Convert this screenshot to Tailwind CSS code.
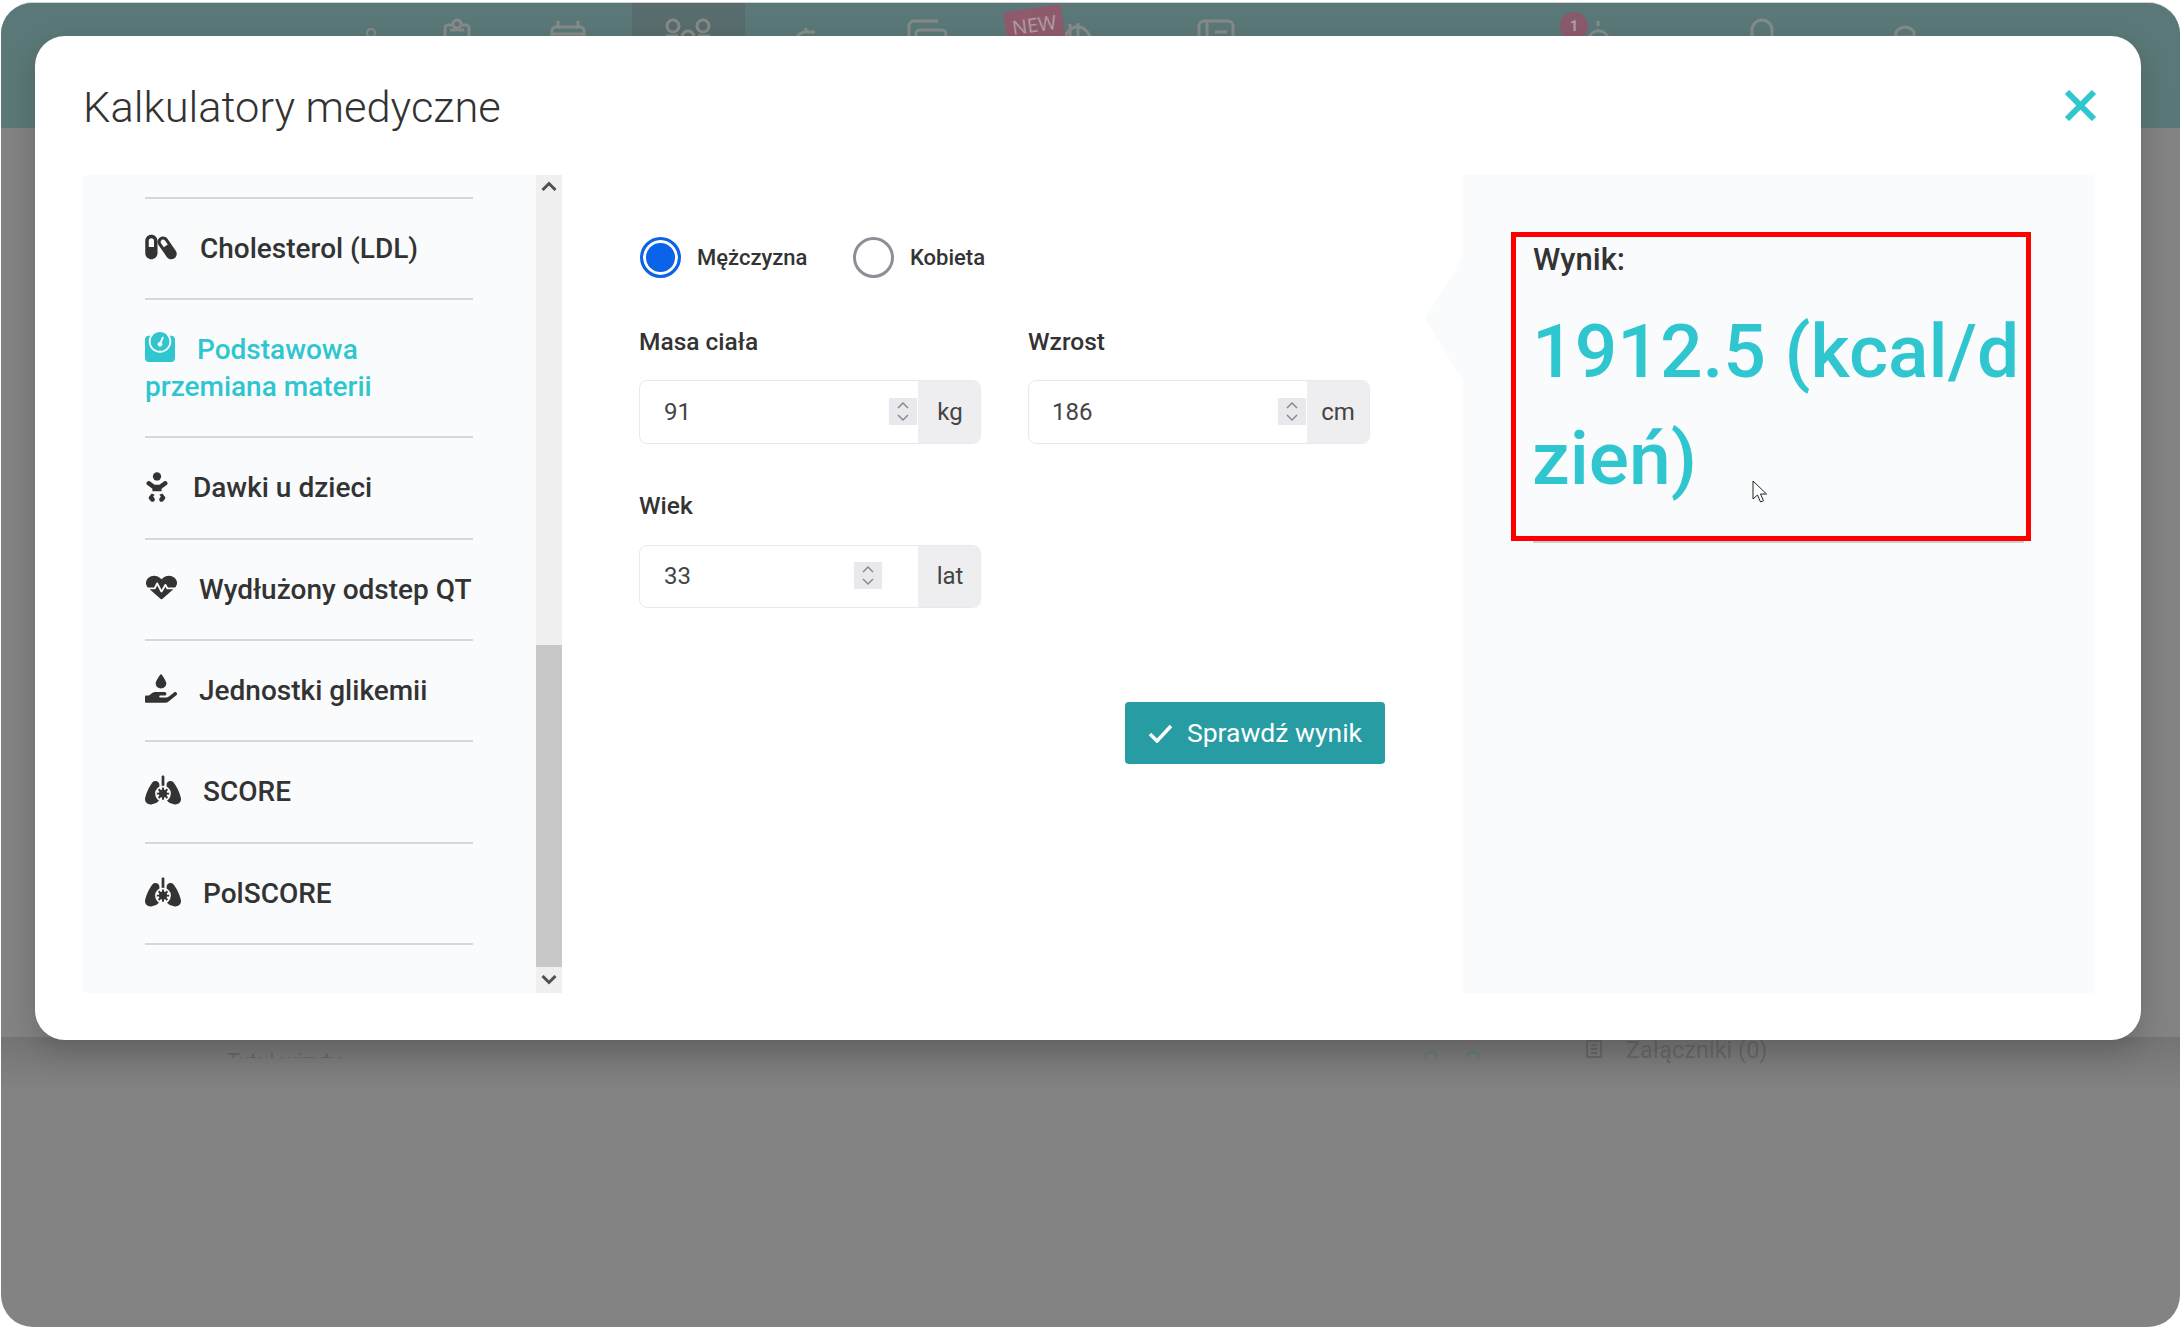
<!DOCTYPE html>
<html lang="pl">
<head>
<meta charset="utf-8">
<title>Kalkulatory medyczne</title>
<script src="https://cdn.jsdelivr.net/npm/@tailwindcss/browser@4"></script>
</head>
<body class="m-0 bg-white font-['Roboto',sans-serif] text-[#333]">
<div class="relative w-[2181px] h-[1329px] overflow-hidden bg-white">

  <!-- Dimmed application behind the dialog -->
  <div class="relative mx-[1px] mt-[2px] h-[1325px] rounded-[32px] overflow-hidden bg-[#838383] border-t border-[#d0d0d0]">
    <header class="relative h-[125px] bg-[#5a7877]">
      <div class="absolute left-[631px] top-0 w-[113px] h-full bg-[#586c6d]"></div>
      <svg class="absolute left-[-1px] top-[-3px] blur-[0.4px]" width="2181" height="60" viewBox="0 0 2181 60" fill="none" stroke="#868a89" stroke-width="3">
        <circle cx="371" cy="33" r="4" stroke-width="2"/>
        <path d="M445 40v-12a3 3 0 0 1 3-3h5M469 40v-12a3 3 0 0 0-3-3h-5"/><circle cx="457" cy="24" r="4"/><path d="M450 30h14"/>
        <path d="M552 40v-9a4 4 0 0 1 4-4h24a4 4 0 0 1 4 4v9zM552 34h32M558 21v6M578 21v6"/>
        <circle cx="673" cy="26" r="6"/><circle cx="703" cy="26" r="6"/><circle cx="688" cy="37" r="6"/><path d="M666 36h12M698 36h12"/>
        <path d="M795 46c0-10 5-14 12-14h8M806 28v5"/>
        <path d="M909 40v-14a5 5 0 0 1 5-5h24M916 40v-6a4 4 0 0 1 4-4h22a4 4 0 0 1 4 4v6"/>
        <path d="M1064 40a14 18 0 0 1 27 0M1070 24v16M1078 23v17"/>
        <path d="M1199 40V26a5 5 0 0 1 5-5h24a5 5 0 0 1 5 5v14M1207 21v19M1215 32h12"/>
        <path d="M1588 40a11 13 0 0 1 21 0M1598 21v5"/>
        <path d="M1752 40v-10a10 10 0 0 1 20 0v10"/>
        <path d="M1896 40v-8a11 11 0 0 1 18 0v8M1892 37h24"/>
      </svg>
      <div class="absolute left-[1005px] top-[5px] w-[58px] h-[44px] pt-[5px] -rotate-[8deg] rounded-[4px] bg-[#8f5a6c] text-center text-[20px] leading-[24px] text-[#b3a5a9] font-['Open_Sans',sans-serif] blur-[0.4px]">NEW</div>
      <div class="absolute left-[1559px] top-[9px] w-[28px] h-[28px] rounded-full bg-[#8a5a6c] text-center text-[15px] font-bold leading-[28px] text-[#b3a0a5] blur-[0.4px]">1</div>
    </header>
    <!-- Content under the dialog: only its upper edge shows -->
    <div class="absolute left-0 top-[1034px] w-full h-[56px] bg-gradient-to-b from-[#747474] to-[#838383]">
      <span class="absolute left-[1625px] top-[3px] text-[23.500px] leading-[20px] text-[#666] blur-[0.3px]">Załączniki (0)</span>
      <svg class="absolute left-[1585px] top-[3px]" width="16" height="18" viewBox="0 0 16 18" fill="none" stroke="#666" stroke-width="2"><path d="M1 1h14v16H1zM5 5h6M5 9h6M5 13h6"/></svg>
      <div class="h-[21px] overflow-hidden relative blur-[0.4px]">
        <span class="absolute left-[226px] top-[12px] text-[22px] leading-[26px] text-[#666]">Tytuł wizyty</span>
        <svg class="absolute left-[1422px] top-[12px]" width="60" height="14" viewBox="0 0 60 14" fill="none" stroke="#5f7a7b" stroke-width="2"><circle cx="8" cy="9" r="6"/><circle cx="50" cy="9" r="6"/></svg>
      </div>
    </div>
  </div>

  <!-- Dialog -->
  <section class="absolute left-[35px] top-[36px] w-[2106px] h-[1004px] rounded-[30px] bg-white pl-[48px] pr-[47px] flex flex-col shadow-[0_12px_30px_rgba(0,0,0,0.18)]">
    <div class="h-[139px] flex justify-between items-start shrink-0">
      <h1 class="mt-[42px] text-[43.400px] leading-[60px] font-light text-[#333]">Kalkulatory medyczne</h1>
      <svg class="mt-[54px] mr-[-3px]" width="33" height="31" viewBox="0 0 33 31" fill="none" stroke="#2fc8cf" stroke-width="6"><path d="M3 2l27 27M30 2L3 29"/></svg>
    </div>

    <div class="flex h-[818px]">
      <!-- Calculator list -->
      <aside class="w-[479px] shrink-0 flex bg-[#fafbfd]">
        <ul class="w-[453px] pl-[62px] pr-[63px] pt-[22px] overflow-hidden text-[28px] font-medium">
          <li class="border-t-2 border-[#d6d7da]"></li>
          <li class="border-b-2 border-[#d6d7da] py-[30.900px] leading-[37.600px] whitespace-nowrap">
            <svg class="inline-block align-[7px] -my-[10px] mr-[23px]" width="32" height="28" viewBox="0 0 576 512" fill="#333"><path fill-rule="evenodd" d="M112 32C50 32 0 82 0 144v224c0 62 50 112 112 112s112-50 112-112V144C224 82 174 32 112 32zM160 256H64V144c0-26 22-48 48-48s48 22 48 48z"/><g transform="rotate(-35 400 272)"><path fill-rule="evenodd" d="M400 40c-55 0-100 45-100 100v264c0 55 45 100 100 100s100-45 100-100V140c0-55-45-100-100-100zM444 230h-88V140c0-24 20-44 44-44s44 20 44 44z"/></g></svg>Cholesterol (LDL)
          </li>
          <li class="border-b-2 border-[#d6d7da] py-[30.400px] leading-[37.600px] text-[#2fc6cf]">
            <svg class="inline-block align-[7px] -my-[10px] mr-[22px]" width="30" height="30" viewBox="0 0 512 512" fill="#2fc6cf"><path d="M448 64h-25.980C438.440 92.280 448 125.010 448 160c0 105.870-86.130 192-192 192S64 265.870 64 160c0-34.990 9.560-67.720 25.980-96H64C28.710 64 0 92.710 0 128v320c0 35.290 28.710 64 64 64h384c35.290 0 64-28.710 64-64V128c0-35.290-28.710-64-64-64zM256 320c88.370 0 160-71.630 160-160S344.370 0 256 0 96 71.630 96 160s71.630 160 160 160zm-.300-151.940l33.580-78.360c3.500-8.170 12.940-11.920 21.030-8.410 8.120 3.480 11.880 12.890 8.410 21l-33.670 78.550C291.730 188 296 197.450 296 208c0 22.090-17.910 40-40 40s-40-17.910-40-40c0-21.980 17.760-39.770 39.700-39.940z"/></svg>Podstawowa przemiana materii
          </li>
          <li class="border-b-2 border-[#d6d7da] py-[30.900px] leading-[37.600px] whitespace-nowrap">
            <svg class="inline-block align-[5px] -my-[10px] ml-[1px] mr-[25px]" width="22" height="30" viewBox="0 0 384 512" fill="#333"><circle cx="192" cy="72" r="72"/><path d="M16 168c-14 17-10 42 8 55l88 65v40h160v-40l88-65c18-13 22-38 8-55-13-17-38-21-56-8l-78 56h-84l-78-56c-18-13-43-9-56 8z"/><path d="M100 370l-44 50c-12 14-12 34-1 49l32 35c8 10 38 14 52 3 17-13 20-38 8-56l-22-28 26-32zM284 370l44 50c12 14 12 34 1 49l-32 35c-8 10-38 14-52 3-17-13-20-38-8-56l22-28-26-32z"/></svg>Dawki u dzieci
          </li>
          <li class="border-b-2 border-[#d6d7da] py-[30.900px] leading-[37.600px] whitespace-nowrap">
            <svg class="inline-block align-[8px] -my-[10px] ml-[1px] mr-[22px]" width="31" height="27" viewBox="0 0 512 512" fill="#333" preserveAspectRatio="none"><path d="M320.200 243.800l-49.700 99.400c-6 12.100-23.400 11.700-28.900-.600l-56.900-126.300-30 71.700H60.600l182.500 186.500c7.100 7.300 18.600 7.300 25.700 0L451.400 288H342.300l-22.100-44.200zM473.700 73.900l-2.400-2.500c-51.500-52.600-135.800-52.600-187.400 0L256 100l-27.900-28.500c-51.500-52.700-135.900-52.700-187.400 0l-2.400 2.400C-10.400 123.700-12.500 203 31 256h102.400l35.900-86.200c5.400-12.900 23.600-13.200 29.400-.400l58.200 129.300 49-97.900c5.900-11.800 22.700-11.800 28.600 0l27.600 55.200H481c43.500-53 41.400-132.300-7.300-182.100z"/></svg>Wydłużony odstep QT
          </li>
          <li class="border-b-2 border-[#d6d7da] py-[30.900px] leading-[37.600px] whitespace-nowrap">
            <svg class="inline-block align-[7px] -my-[10px] mr-[22px]" width="32" height="29" viewBox="0 0 576 512" fill="#333"><path d="M288 256c53 0 96-42.100 96-94 0-40-57.100-120.700-83.200-155.600-6.400-8.500-19.200-8.500-25.600 0C249.100 41.300 192 122 192 162c0 51.900 43 94 96 94zm277.300 72.100c-11.800-10.700-30.200-10-42.600 0L430.300 402c-11.300 9.100-25.400 14-40 14H272c-8.800 0-16-7.200-16-16s7.200-16 16-16h78.300c15.900 0 30.700-10.900 33.300-26.600 3.300-20-12.100-37.400-31.600-37.400H192c-27 0-53.100 9.300-74.100 26.300L71.400 384H16c-8.800 0-16 7.200-16 16v96c0 8.800 7.200 16 16 16h356.800c14.500 0 28.600-4.900 40-14L564 377c15.200-12.100 16.400-35.300 1.300-48.900z"/></svg>Jednostki glikemii
          </li>
          <li class="border-b-2 border-[#d6d7da] py-[30.900px] leading-[37.600px] whitespace-nowrap">
            <svg class="inline-block align-[6px] -my-[10px] mr-[22px]" width="36" height="30" viewBox="0 0 640 512" fill="#333"><path d="M636.110 390.150C614.440 308.850 580.070 231 534.100 159.130 511.980 124.560 498.030 96 454.050 96 415.360 96 384 125.420 384 161.710v60.110l-32.880-21.920a15.996 15.996 0 0 1-7.120-13.310V16c0-8.840-7.160-16-16-16h-16c-8.840 0-16 7.160-16 16v170.590c0 5.350-2.670 10.340-7.120 13.310L256 221.820v-60.110C256 125.420 224.640 96 185.950 96c-43.980 0-57.930 28.560-80.050 63.130C59.930 231 25.560 308.850 3.890 390.150 1.300 399.840 0 409.790 0 419.780c0 61.230 62.480 105.440 125.240 88.620l59.500-15.950c42.180-11.300 71.260-47.470 71.260-88.620v-87.490l64-42.670 64 42.670v87.490c0 41.150 29.080 77.320 71.260 88.620l59.500 15.950C577.520 525.220 640 481.010 640 419.780c0-9.990-1.300-19.940-3.890-29.630z"/><circle cx="320" cy="320" r="140" fill="#fafbfd"/><circle cx="320" cy="320" r="72" fill="#333"/><path d="M320 210v220M210 320h220M242 242l156 156M398 242L242 398" stroke="#333" stroke-width="34"/></svg>SCORE
          </li>
          <li class="border-b-2 border-[#d6d7da] py-[30.900px] leading-[37.600px] whitespace-nowrap">
            <svg class="inline-block align-[6px] -my-[10px] mr-[22px]" width="36" height="30" viewBox="0 0 640 512" fill="#333"><path d="M636.110 390.150C614.440 308.850 580.070 231 534.100 159.130 511.980 124.560 498.030 96 454.050 96 415.360 96 384 125.420 384 161.710v60.110l-32.880-21.920a15.996 15.996 0 0 1-7.120-13.310V16c0-8.840-7.160-16-16-16h-16c-8.840 0-16 7.160-16 16v170.590c0 5.350-2.670 10.340-7.120 13.310L256 221.820v-60.110C256 125.420 224.640 96 185.950 96c-43.980 0-57.930 28.560-80.050 63.130C59.930 231 25.560 308.850 3.890 390.150 1.300 399.840 0 409.790 0 419.780c0 61.230 62.480 105.440 125.240 88.620l59.500-15.950c42.180-11.300 71.260-47.470 71.260-88.620v-87.490l64-42.670 64 42.670v87.490c0 41.150 29.080 77.320 71.260 88.620l59.500 15.950C577.520 525.220 640 481.010 640 419.780c0-9.990-1.300-19.940-3.890-29.630z"/><circle cx="320" cy="320" r="140" fill="#fafbfd"/><circle cx="320" cy="320" r="72" fill="#333"/><path d="M320 210v220M210 320h220M242 242l156 156M398 242L242 398" stroke="#333" stroke-width="34"/></svg>PolSCORE
          </li>
        </ul>
        <div class="w-[26px] flex flex-col bg-[#f0f0f0]">
          <div class="h-[24px] flex items-center justify-center">
            <svg class="-mt-[2px]" width="16" height="10" viewBox="0 0 16 10" fill="none" stroke="#505050" stroke-width="3"><path d="M1.500 9L8 2.500 14.500 9"/></svg>
          </div>
          <div class="mt-[446px] h-[322px] bg-[#c8c8c8]"></div>
          <div class="flex-1 flex items-center justify-center">
            <svg width="16" height="10" viewBox="0 0 16 10" fill="none" stroke="#505050" stroke-width="3"><path d="M1.500 1L8 7.500 14.500 1"/></svg>
          </div>
        </div>
      </aside>

      <!-- Form -->
      <form class="w-[901px] shrink-0 pl-[78px] pr-[78px] pt-[62px] flex flex-col">
        <div class="flex items-center h-[40px] text-[22px] font-medium">
          <span class="w-[41px] h-[41px] rounded-full border-[3px] border-[#0a63e8] bg-[#0a63e8] shadow-[inset_0_0_0_3px_#fff]"></span>
          <span class="ml-[16px] w-[156px] pt-[1px]">Mężczyzna</span>
          <span class="w-[41px] h-[41px] rounded-full border-[3px] border-[#8e8e96] bg-white"></span>
          <span class="ml-[16px] pt-[1px]">Kobieta</span>
        </div>

        <div class="mt-[48px] -ml-[1px] grid grid-cols-[342px_342px] gap-x-[47px] text-[24px]">
          <div>
            <div class="font-medium text-[24.500px] leading-[34px]">Masa ciała</div>
            <div class="mt-[21px] h-[64px] flex rounded-[8px] border border-[#e6eaf0] overflow-hidden">
              <div class="flex-1 pl-[24px] leading-[62px] text-[#444] relative">91
                <span class="absolute right-[1px] top-[17px] w-[28px] h-[27px] bg-[#e9e9ed] flex items-center justify-center">
                  <svg width="14" height="23" viewBox="0 0 14 23" fill="none" stroke="#8a8a8e" stroke-width="1.500"><path d="M2 8l5-5 5 5M2 15l5 5 5-5"/></svg>
                </span>
              </div>
              <div class="w-[62px] pl-[2px] bg-[#eeeef0] text-center leading-[62px] text-[#444]">kg</div>
            </div>
          </div>
          <div>
            <div class="font-medium text-[24.500px] leading-[34px]">Wzrost</div>
            <div class="mt-[21px] h-[64px] flex rounded-[8px] border border-[#e6eaf0] overflow-hidden">
              <div class="flex-1 pl-[23px] leading-[62px] text-[#444] relative">186
                <span class="absolute right-[1px] top-[17px] w-[28px] h-[27px] bg-[#e9e9ed] flex items-center justify-center">
                  <svg width="14" height="23" viewBox="0 0 14 23" fill="none" stroke="#8a8a8e" stroke-width="1.500"><path d="M2 8l5-5 5 5M2 15l5 5 5-5"/></svg>
                </span>
              </div>
              <div class="w-[62px] bg-[#eeeef0] text-center leading-[62px] text-[#444]">cm</div>
            </div>
          </div>
          <div class="mt-[45px]">
            <div class="font-medium text-[24.500px] leading-[34px]">Wiek</div>
            <div class="mt-[22px] h-[63px] flex rounded-[8px] border border-[#e6eaf0] overflow-hidden">
              <div class="flex-1 pl-[24px] leading-[61px] text-[#444] relative">33
                <span class="absolute right-[36px] top-[16px] w-[28px] h-[27px] bg-[#e9e9ed] flex items-center justify-center">
                  <svg width="14" height="23" viewBox="0 0 14 23" fill="none" stroke="#8a8a8e" stroke-width="1.500"><path d="M2 8l5-5 5 5M2 15l5 5 5-5"/></svg>
                </span>
              </div>
              <div class="w-[62px] pl-[2px] bg-[#eeeef0] text-center leading-[61px] text-[#444]">lat</div>
            </div>
          </div>
        </div>

        <button type="button" class="mt-[94px] self-end w-[260px] h-[62px] rounded-[4px] bg-[#279ca3] text-white text-[26.500px] flex items-center justify-center gap-[14px]">
          <svg width="25" height="19" viewBox="0 0 25 19" fill="none" stroke="#fff" stroke-width="3.500"><path d="M2 10l7 7L23 2"/></svg>
          Sprawdź wynik
        </button>
      </form>

      <!-- Result -->
      <div class="relative flex-1 bg-[#fafbfd] pl-[48px] pt-[57px]">
        <span class="absolute left-[-38px] top-[82px] border-y-[62px] border-r-[38px] border-y-transparent border-r-[#fafbfd]"></span>
        <div class="relative w-[520px] h-[309px] border-[5px] border-[#ff0000] pl-[17px] pr-[2px] pt-[6px]">
          <div class="text-[31px] leading-[34px] font-medium">Wynik:</div>
          <div class="mt-[21px] -ml-[1px] text-[75px] leading-[107px] font-medium text-[#2fc6cf] break-all">1912.5 (kcal/dzień)</div>
          <svg class="absolute left-[236px] top-[243px]" width="16" height="24" viewBox="0 0 16 24" fill="#fff" stroke="#222" stroke-width="1"><path d="M1 1v18l4.500-4 3 7 3-1.300-3-6.700h6z"/></svg>
          <div class="absolute left-[17px] right-[2px] bottom-[-7px] h-[2px] bg-[#cfcfd2]"></div>
        </div>
      </div>
    </div>
  </section>
</div>
</body>
</html>
